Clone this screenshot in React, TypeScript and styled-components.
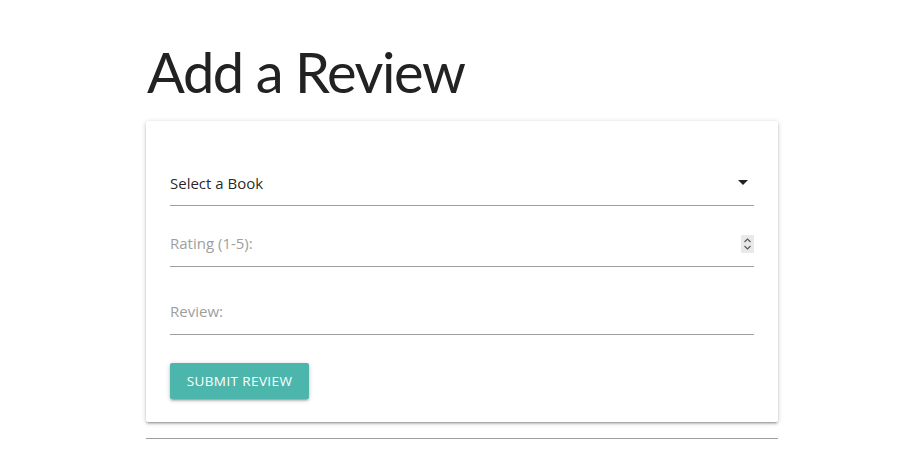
import React from "react";
import styled, { createGlobalStyle } from "styled-components";

const Global = createGlobalStyle`
  html, body { margin: 0; padding: 0; background: #fff; }
  body { font-family: "Open Sans", "Noto Sans", Arial, sans-serif; color: rgba(0,0,0,0.87); }
  * { box-sizing: border-box; }
`;

const Container = styled.div`
  width: 636px;
  margin: 0 auto;
  padding: 37px 0 0 4px;
`;

const Title = styled.h1`
  margin: 0 0 14px 1px;
  font-family: Lato, "Open Sans", sans-serif;
  font-size: 56px;
  font-weight: 400;
  line-height: 70px;
  letter-spacing: -1.4px;
  color: #222;
`;

const Card = styled.div`
  background: #fff;
  border-radius: 2px;
  box-shadow: 0 2px 2px 0 rgba(0,0,0,0.14), 0 3px 1px -2px rgba(0,0,0,0.12), 0 1px 5px 0 rgba(0,0,0,0.2);
`;

const Form = styled.form`
  display: flex;
  flex-direction: column;
  padding: 39px 24px 23px;
`;

const Field = styled.div<{ $gap?: number }>`
  display: flex;
  align-items: center;
  justify-content: space-between;
  height: 46px;
  margin-top: ${(p) => p.$gap ?? 0}px;
  border-bottom: 1px solid #9e9e9e;
  font-size: 15px;
`;

const Value = styled.span`
  color: rgba(0,0,0,0.87);
  margin-top: 1px;
`;

const Placeholder = styled.span`
  color: #9e9e9e;
  margin-top: -1px;
`;

const Caret = styled.svg`
  margin-right: 6px;
`;

const Spinner = styled.div`
  width: 13px;
  height: 18px;
  background: #e9e9e9;
  display: flex;
  align-items: center;
  justify-content: center;
  margin-top: 0;
`;

const Button = styled.button`
  align-self: flex-start;
  margin-top: 28px;
  height: 36px;
  width: 139px;
  padding: 0;
  border: none;
  border-radius: 2px;
  background: #4db6ac;
  color: #fff;
  font-family: inherit;
  font-size: 13.5px;
  letter-spacing: 0.4px;
  text-transform: uppercase;
  box-shadow: 0 2px 2px 0 rgba(0,0,0,0.14), 0 3px 1px -2px rgba(0,0,0,0.12), 0 1px 5px 0 rgba(0,0,0,0.2);
`;

const Rule = styled.hr`
  margin: 16px 0 0;
  border: none;
  border-top: 1px solid #9e9e9e;
`;

export default function App() {
  return (
    <>
      <Global />
      <Container>
        <Title>Add a Review</Title>
        <Card>
          <Form onSubmit={(e) => e.preventDefault()}>
            <Field>
              <Value>Select a Book</Value>
              <Caret width="10" height="5" viewBox="0 0 10 5">
                <path d="M0 0h10L5 5z" fill="#222" />
              </Caret>
            </Field>
            <Field $gap={15}>
              <Placeholder>Rating (1-5):</Placeholder>
              <Spinner>
                <svg width="9" height="14" viewBox="0 0 9 14">
                  <path d="M1.5 5L4.5 2L7.5 5M1.5 9L4.5 12L7.5 9" fill="none" stroke="#555" strokeWidth="1.1" />
                </svg>
              </Spinner>
            </Field>
            <Field $gap={22}>
              <Placeholder>Review:</Placeholder>
            </Field>
            <Button type="submit">Submit Review</Button>
          </Form>
        </Card>
        <Rule />
      </Container>
    </>
  );
}
